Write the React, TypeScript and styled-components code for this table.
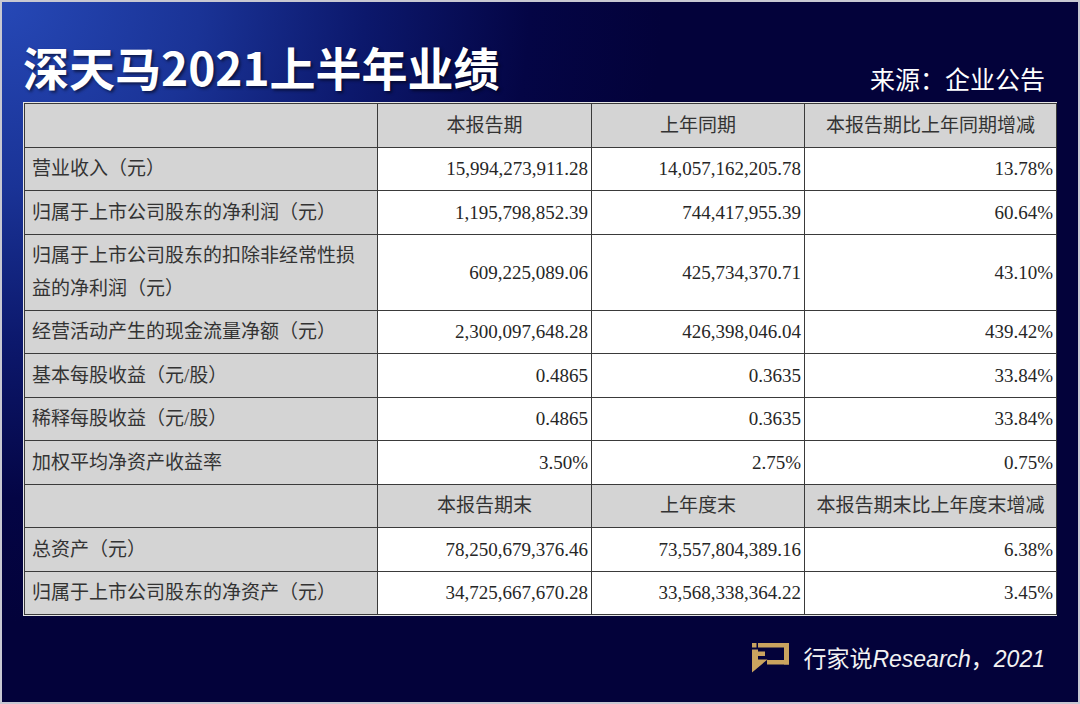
import * as React from 'react';
import styled, { createGlobalStyle } from 'styled-components';

const GlobalStyle = createGlobalStyle`
  html, body {
    margin: 0;
    padding: 0;
    background: #d4d4dc;
  }
  * {
    box-sizing: border-box;
  }
`;

type Row = {
  label: string;
  cur: string;
  prev: string;
  change: string;
  tall?: boolean;
};

const incomeRows: Row[] = [
  { label: '营业收入（元）', cur: '15,994,273,911.28', prev: '14,057,162,205.78', change: '13.78%' },
  { label: '归属于上市公司股东的净利润（元）', cur: '1,195,798,852.39', prev: '744,417,955.39', change: '60.64%' },
  {
    label: '归属于上市公司股东的扣除非经常性损益的净利润（元）',
    cur: '609,225,089.06',
    prev: '425,734,370.71',
    change: '43.10%',
    tall: true,
  },
  { label: '经营活动产生的现金流量净额（元）', cur: '2,300,097,648.28', prev: '426,398,046.04', change: '439.42%' },
  { label: '基本每股收益（元/股）', cur: '0.4865', prev: '0.3635', change: '33.84%' },
  { label: '稀释每股收益（元/股）', cur: '0.4865', prev: '0.3635', change: '33.84%' },
  { label: '加权平均净资产收益率', cur: '3.50%', prev: '2.75%', change: '0.75%' },
];

const assetRows: Row[] = [
  { label: '总资产（元）', cur: '78,250,679,376.46', prev: '73,557,804,389.16', change: '6.38%' },
  { label: '归属于上市公司股东的净资产（元）', cur: '34,725,667,670.28', prev: '33,568,338,364.22', change: '3.45%' },
];

export default function App() {
  return (
    <>
      <GlobalStyle />
      <Frame>
        <Header>
          <Title>深天马2021上半年业绩</Title>
          <Source>来源：企业公告</Source>
        </Header>

        <TableWrap>
          <Table>
            <colgroup>
              <col style={{ width: 353 }} />
              <col style={{ width: 214 }} />
              <col style={{ width: 213 }} />
              <col style={{ width: 252 }} />
            </colgroup>
            <tbody>
              <HeadRow>
                <HeadCell />
                <HeadCell>本报告期</HeadCell>
                <HeadCell>上年同期</HeadCell>
                <HeadCell>本报告期比上年同期增减</HeadCell>
              </HeadRow>
              {incomeRows.map((r) => (
                <DataRow key={r.label} $tall={r.tall}>
                  <LabelCell>{r.label}</LabelCell>
                  <NumCell>{r.cur}</NumCell>
                  <NumCell>{r.prev}</NumCell>
                  <NumCell>{r.change}</NumCell>
                </DataRow>
              ))}
              <HeadRow>
                <HeadCell />
                <HeadCell>本报告期末</HeadCell>
                <HeadCell>上年度末</HeadCell>
                <HeadCell>本报告期末比上年度末增减</HeadCell>
              </HeadRow>
              {assetRows.map((r) => (
                <DataRow key={r.label}>
                  <LabelCell>{r.label}</LabelCell>
                  <NumCell>{r.cur}</NumCell>
                  <NumCell>{r.prev}</NumCell>
                  <NumCell>{r.change}</NumCell>
                </DataRow>
              ))}
            </tbody>
          </Table>
        </TableWrap>

        <Footer>
          <Logo viewBox="0 0 37 30" aria-hidden="true">
            <rect x="0" y="0" width="4.5" height="4.5" />
            <rect x="6" y="0" width="31" height="4.5" />
            <rect x="32" y="0" width="5" height="21.5" />
            <rect x="15" y="17" width="22" height="4.5" />
            <path d="M0 6.5 H6 V8.5 H13 V13 H6 V16.5 H15.5 L0 29.5 Z" />
          </Logo>
          <Credit>
            行家说<Latin>Research</Latin>，<Latin>2021</Latin>
          </Credit>
        </Footer>
      </Frame>
    </>
  );
}

const Frame = styled.div`
  width: 1080px;
  height: 704px;
  border: 2px solid #c8c8d2;
  padding: 0 21px;
  display: flex;
  flex-direction: column;
  background-color: #03023a;
  background-image: radial-gradient(
    ellipse 660px 620px at 0 0,
    #2648b6 0%,
    #1a3396 30%,
    #0c186c 55%,
    #040545 80%,
    #03023a 100%
  );
  overflow: hidden;
`;

const Header = styled.div`
  height: 100px;
  display: flex;
  align-items: flex-end;
  justify-content: space-between;
  padding-bottom: 8px;
`;

const Title = styled.h1`
  margin: 0 0 5px 0;
  font-family: 'Noto Sans CJK SC', sans-serif;
  font-weight: 700;
  font-size: 46px;
  line-height: 1;
  color: #ffffff;
  text-shadow: 2px 2px 3px rgba(0, 0, 10, 0.55);
`;

const Source = styled.div`
  font-family: 'Noto Sans CJK SC', sans-serif;
  font-size: 25px;
  line-height: 1;
  color: #ffffff;
  margin-right: 12px;
  margin-bottom: 3px;
`;

const TableWrap = styled.div`
  border: 1px solid #e6e6e6;
  width: 1034px;
`;

const Table = styled.table`
  width: 100%;
  table-layout: fixed;
  border-collapse: collapse;
  font-family: 'Liberation Serif', 'Noto Sans CJK SC', serif;
  font-size: 19px;
  color: #262626;
`;

const HeadRow = styled.tr`
  height: 43.5px;
`;

const DataRow = styled.tr<{ $tall?: boolean }>`
  height: ${(p) => (p.$tall ? '76px' : '43.5px')};
`;

const Cell = styled.td`
  border: 1px solid #3a3a3a;
  padding: 0 3px;
  line-height: 33px;
  vertical-align: middle;
`;

const HeadCell = styled(Cell)`
  background: #d4d4d4;
  text-align: center;
  color: #333333;
`;

const LabelCell = styled(Cell)`
  background: #d4d4d4;
  padding: 0 6px 0 7px;
  color: #333333;
`;

const NumCell = styled(Cell)`
  background: #ffffff;
  text-align: right;
`;

const Footer = styled.div`
  flex: 1;
  display: flex;
  align-items: center;
  justify-content: flex-end;
  gap: 14px;
  padding-right: 12px;
  padding-bottom: 2px;
`;

const Logo = styled.svg`
  width: 37px;
  height: 30px;
  fill: #c9a35f;
  flex-shrink: 0;
`;

const Credit = styled.div`
  font-family: 'Noto Sans CJK SC', sans-serif;
  font-size: 23px;
  line-height: 1;
  color: #f2f2f2;
`;

const Latin = styled.span`
  font-family: 'Liberation Sans', Arial, sans-serif;
  font-style: italic;
`;
